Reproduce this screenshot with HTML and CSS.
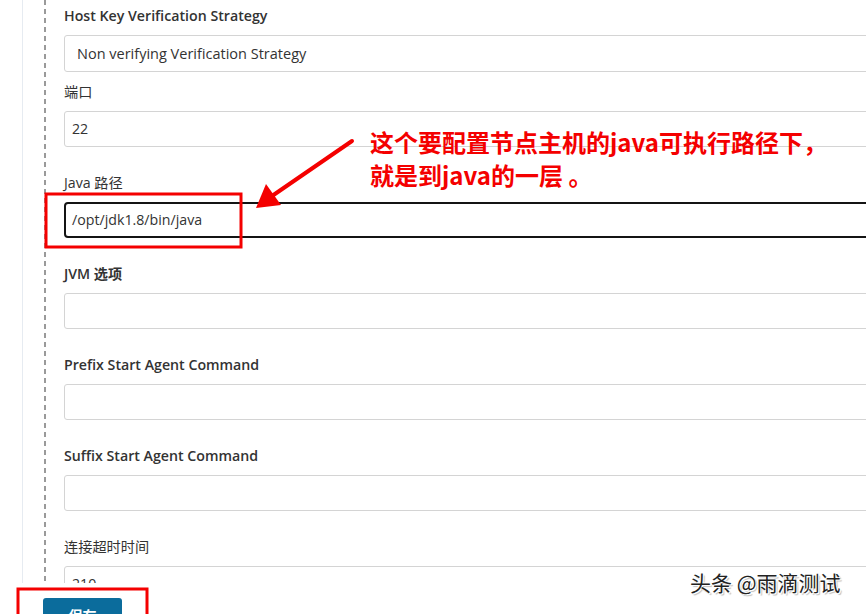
FILE: index.html
```html
<!DOCTYPE html>
<html lang="zh-CN">
<head>
    <meta charset="UTF-8">
    <title>节点配置</title>
    <link rel="stylesheet" href="styles.css">
</head>
<body>
<div class="page">
    <div class="rail"></div>
    <div class="section">
        <div class="form">
            <div class="field tight">
                <label class="label">Host Key Verification Strategy</label>
                <div class="input select">Non verifying Verification Strategy</div>
            </div>
            <div class="field">
                <label class="label cjk">端口</label>
                <div class="input">22</div>
            </div>
            <div class="field">
                <label class="label cjk">Java 路径</label>
                <div class="input focus">/opt/jdk1.8/bin/java</div>
            </div>
            <div class="field">
                <label class="label">JVM 选项</label>
                <div class="input"></div>
            </div>
            <div class="field">
                <label class="label">Prefix Start Agent Command</label>
                <div class="input"></div>
            </div>
            <div class="field">
                <label class="label">Suffix Start Agent Command</label>
                <div class="input"></div>
            </div>
            <div class="field">
                <label class="label cjk">连接超时时间</label>
                <div class="input">210</div>
            </div>
        </div>
    </div>
</div>

<div class="bottom-bar">
    <button class="btn-save">保存</button>
</div>

<!-- 标注 -->
<svg class="marks" width="866" height="614" viewBox="0 0 866 614">
    <rect x="46" y="194" width="195" height="53" fill="none" stroke="#f40000" stroke-width="3"/>
    <rect x="18" y="589" width="129" height="40" fill="none" stroke="#f40000" stroke-width="3"/>
    <line x1="352" y1="141" x2="272" y2="196" stroke="#f40000" stroke-width="4" stroke-linecap="round"/>
    <polygon points="256,208 266,184 281,205" fill="#f40000"/>
</svg>
<div class="note">
    这个要配置节点主机的java可执行路径下，<br>
    就是到java的一层 。
</div>
<div class="watermark">头条 @雨滴测试</div>
</body>
</html>
```

FILE: styles.css
```css
* {
    margin: 0;
    padding: 0;
    box-sizing: border-box;
}
html, body {
    width: 866px;
    height: 614px;
    overflow: hidden;
    background: #fff;
}
body {
    font-family: "Open Sans", "Noto Sans CJK SC", sans-serif;
    color: #333;
    position: relative;
}
.page {
    display: flex;
    height: 614px;
}
.rail {
    width: 23px;
    flex: none;
    border-right: 1px solid #e6ebf1;
}
.section {
    margin-left: 21px;
    padding-left: 20px;
    background: repeating-linear-gradient(#9a9a9a 0 5px, transparent 5px 9px) left top / 2px 100% no-repeat;
    flex: none;
    width: 860px;
}
.form {
    padding-top: 6px;
}
.field {
    margin-bottom: 26px;
}
.field.tight {
    margin-bottom: 10px;
}
.label {
    display: block;
    height: 20px;
    line-height: 20px;
    font-size: 14.2px;
    font-weight: 600;
    margin-bottom: 9px;
    color: #333;
}
.label.cjk {
    font-weight: 400;
}
.input {
    height: 36px;
    border: 1px solid #d4d4d4;
    border-radius: 3px;
    padding: 0 7px;
    font-size: 14.2px;
    line-height: 34px;
    color: #333;
    background: #fff;
}
.input.select {
    height: 37px;
    line-height: 35px;
    padding-left: 12px;
    font-size: 14.5px;
}
.input.focus {
    border: 2px solid #141414;
    border-radius: 4px;
    padding-left: 6px;
    line-height: 32px;
}

/* 底部保存栏 */
.bottom-bar {
    position: absolute;
    left: 0;
    top: 583px;
    width: 866px;
    height: 31px;
    background: #fff;
    padding: 15px 0 0 43px;
}
.btn-save {
    width: 79px;
    height: 34px;
    border: none;
    border-radius: 3px;
    background: #0b6c9c;
    color: #fff;
    font: 600 14px/34px "Noto Sans CJK SC", sans-serif;
}

/* 标注层 */
.marks {
    position: absolute;
    left: 0;
    top: 0;
}
.note {
    position: absolute;
    left: 370px;
    top: 125px;
    font: 700 24px/33px "Noto Sans CJK SC", sans-serif;
    color: #f40000;
    white-space: nowrap;
}
.watermark {
    position: absolute;
    left: 690px;
    top: 568px;
    font: 400 21px/28px "Noto Sans CJK SC", sans-serif;
    color: #222;
    text-shadow: 1px 1px 0 #fff, -1px -1px 0 #fff, 2px 2px 1px rgba(0,0,0,0.25);
    white-space: nowrap;
}
```
